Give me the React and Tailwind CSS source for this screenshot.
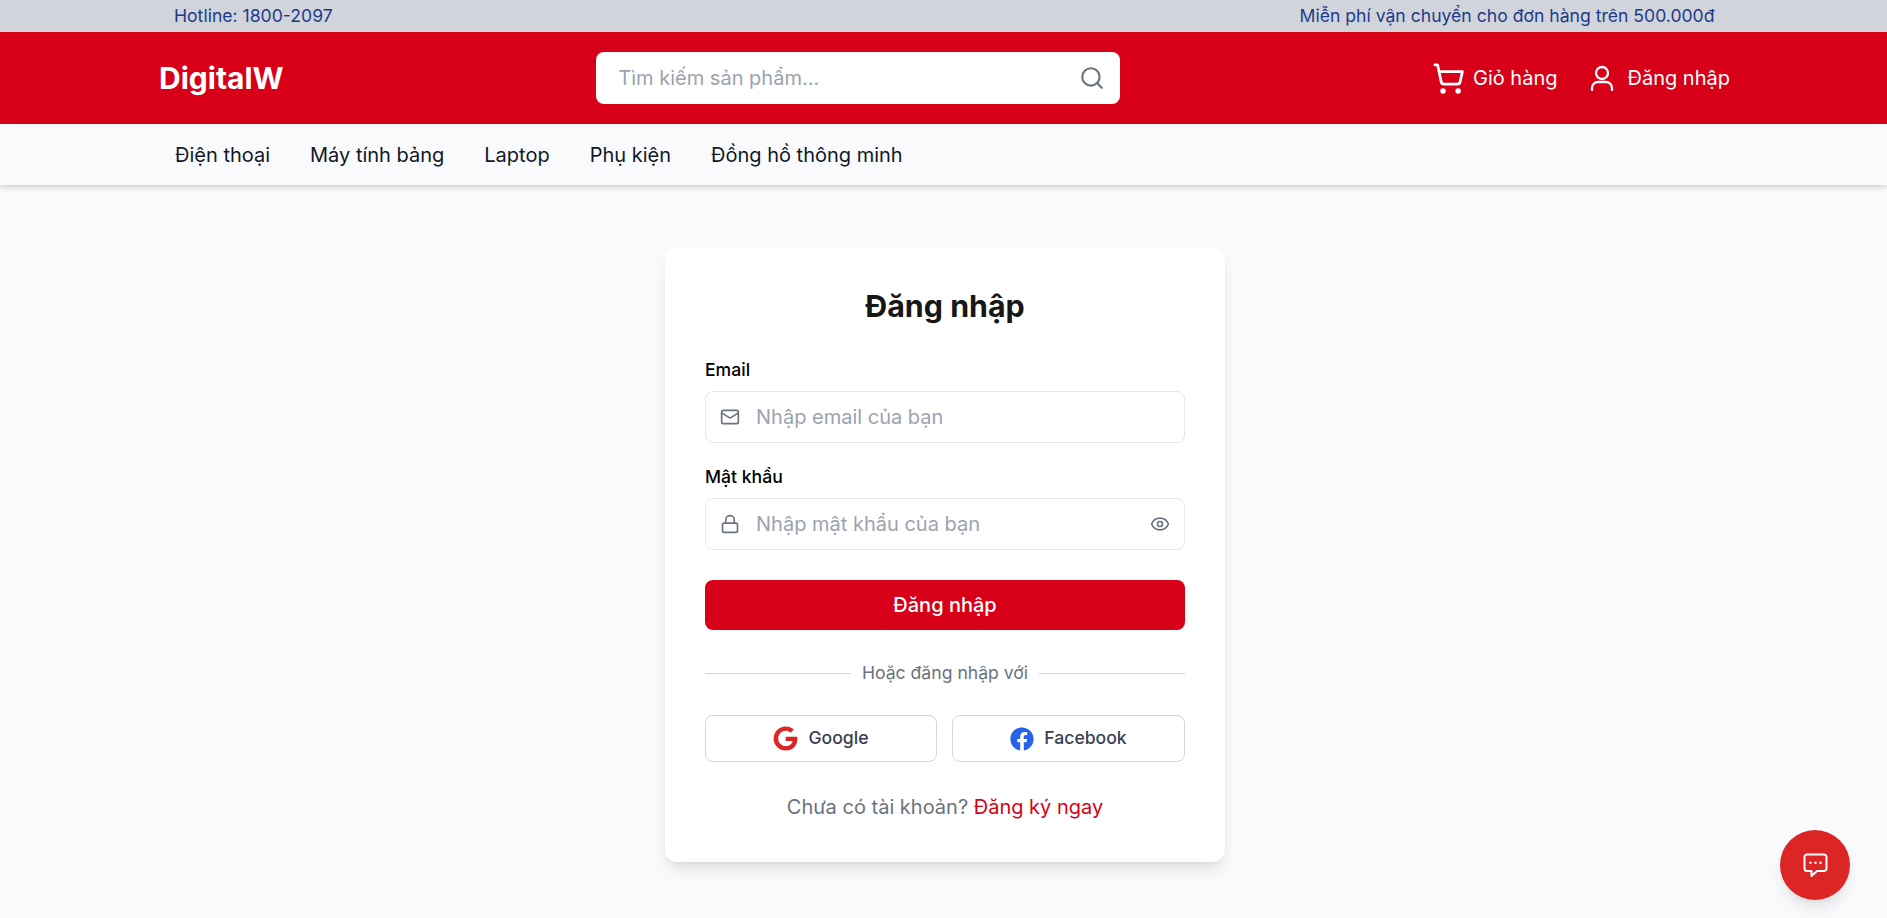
import React from "react";
import { ShoppingCart, Search, Mail, Lock, Eye } from "lucide-react";
import { FaGoogle, FaFacebook } from "react-icons/fa";

const navItems = ["Điện thoại", "Máy tính bảng", "Laptop", "Phụ kiện", "Đồng hồ thông minh"];

function Field({ label, placeholder, icon, trailing, type = "text" }) {
  return (
    <div>
      <label className="block text-[17.6px] font-medium leading-[26px] text-black mb-[8px]">{label}</label>
      <div className="flex items-center h-[52px] border border-[#e5e7eb] rounded-lg pl-[14px] pr-[14px] gap-[16px] bg-white">
        {icon}
        <input
          type={type}
          placeholder={placeholder}
          className="flex-1 min-w-0 text-xl text-[#1f2937] placeholder:text-[#9ca3af] outline-none bg-transparent"
        />
        {trailing}
      </div>
    </div>
  );
}

export default function App() {
  return (
    <div className="min-h-screen bg-[#f9fafb] font-['Inter',sans-serif] text-black">
      <div className="h-8 bg-[#d1d5db] text-[#1e3a8a] text-[17.6px]">
        <div className="max-w-[1542px] h-full mx-auto flex items-center justify-between pl-[1.5px]">
          <span>Hotline: 1800-2097</span>
          <span>Miễn phí vận chuyển cho đơn hàng trên 500.000đ</span>
        </div>
      </div>

      <header className="h-[92px] bg-[#d70018]">
        <div className="max-w-[1573px] h-full mx-auto flex items-center justify-between pl-[2px]">
          <div className="text-3xl font-bold text-white">DigitalW</div>
          <div className="flex items-center w-[524px] h-[52px] bg-white rounded-lg pl-[22px] pr-[15px] mr-[-1px]">
            <input
              placeholder="Tìm kiếm sản phẩm..."
              className="flex-1 min-w-0 text-xl text-[#1f2937] placeholder:text-[#9ca3af] outline-none"
            />
            <Search size={26} strokeWidth={2} className="text-[#6b7280]" />
          </div>
          <div className="flex items-center gap-[32px] text-white text-xl">
            <a className="flex items-center gap-[8px]">
              <ShoppingCart size={33} strokeWidth={2} />
              <span>Giỏ hàng</span>
            </a>
            <a className="flex items-center gap-[14px]">
              <svg width="24" height="26" viewBox="0 0 24 26" fill="none" stroke="currentColor" strokeWidth="2.3" strokeLinecap="round">
                <circle cx="12" cy="8" r="6" />
                <path d="M2 25v-2a6 6 0 0 1 6-6h8a6 6 0 0 1 6 6v2" />
              </svg>
              <span>Đăng nhập</span>
            </a>
          </div>
        </div>
      </header>

      <nav className="h-[61px] bg-[#f9fafb] shadow-[0_2px_6px_rgba(0,0,0,0.18)] relative">
        <div className="max-w-[1539px] h-full mx-auto flex items-center gap-10 text-xl text-[#111827] pl-[1px]">
          {navItems.map((n) => (
            <a key={n}>{n}</a>
          ))}
        </div>
      </nav>

      <main className="flex justify-center pt-[62px] pl-[3px]">
        <div className="w-[560px] bg-white rounded-xl shadow-lg pt-10 px-10 pb-[41px]">
          <h1 className="text-[30.4px] leading-[38px] font-bold text-center text-[#171717] mb-[32px]">Đăng nhập</h1>
          <div className="flex flex-col gap-[21px]">
            <Field
              label="Email"
              placeholder="Nhập email của bạn"
              icon={<Mail size={20} className="text-[#6b7280] shrink-0" />}
            />
            <Field
              label="Mật khẩu"
              type="password"
              placeholder="Nhập mật khẩu của bạn"
              icon={<Lock size={20} className="text-[#6b7280] shrink-0" />}
              trailing={<Eye size={20} className="text-[#6b7280] shrink-0" />}
            />
          </div>
          <button className="mt-[30px] w-full h-[50px] bg-[#d70018] text-white rounded-lg text-xl font-medium">
            Đăng nhập
          </button>
          <div className="flex items-center gap-[10px] mt-[30px] text-[#6b7280] text-[17.6px] leading-[26px]">
            <div className="flex-1 h-px bg-[#d1d5db]" />
            <span className="px-[1px]">Hoặc đăng nhập với</span>
            <div className="flex-1 h-px bg-[#d1d5db]" />
          </div>
          <div className="grid grid-cols-[232px_233px] gap-[15px] mt-[29px]">
            <button className="h-[47px] flex items-center justify-center gap-[10px] border border-[#d1d5db] rounded-lg text-[#374151] text-[17.6px] font-medium">
              <FaGoogle size={25} className="text-[#dc2626]" />
              Google
            </button>
            <button className="h-[47px] flex items-center justify-center gap-[10px] border border-[#d1d5db] rounded-lg text-[#374151] text-[17.6px] font-medium">
              <FaFacebook size={24} className="text-[#2563eb]" />
              Facebook
            </button>
          </div>
          <p className="text-center text-xl leading-7 text-[#6b7280] mt-[31px]">
            Chưa có tài khoản? <a className="text-[#d70018]">Đăng ký ngay</a>
          </p>
        </div>
      </main>

      <button className="fixed right-[37px] bottom-[18px] w-[70px] h-[70px] rounded-full bg-[#dc2626] shadow-lg flex items-center justify-center text-white">
        <svg width="25" height="25" viewBox="0 0 25 25" fill="none" stroke="currentColor" strokeWidth="2" strokeLinejoin="round">
          <path d="M4 1.5h17a2.5 2.5 0 0 1 2.5 2.5v11.5a2.5 2.5 0 0 1-2.5 2.5h-7l-5.5 5v-5H4a2.5 2.5 0 0 1-2.5-2.5V4A2.5 2.5 0 0 1 4 1.5z" />
          <circle cx="7.5" cy="9.7" r="1.2" fill="currentColor" stroke="none" />
          <circle cx="12.5" cy="9.7" r="1.2" fill="currentColor" stroke="none" />
          <circle cx="17.5" cy="9.7" r="1.2" fill="currentColor" stroke="none" />
        </svg>
      </button>
    </div>
  );
}
